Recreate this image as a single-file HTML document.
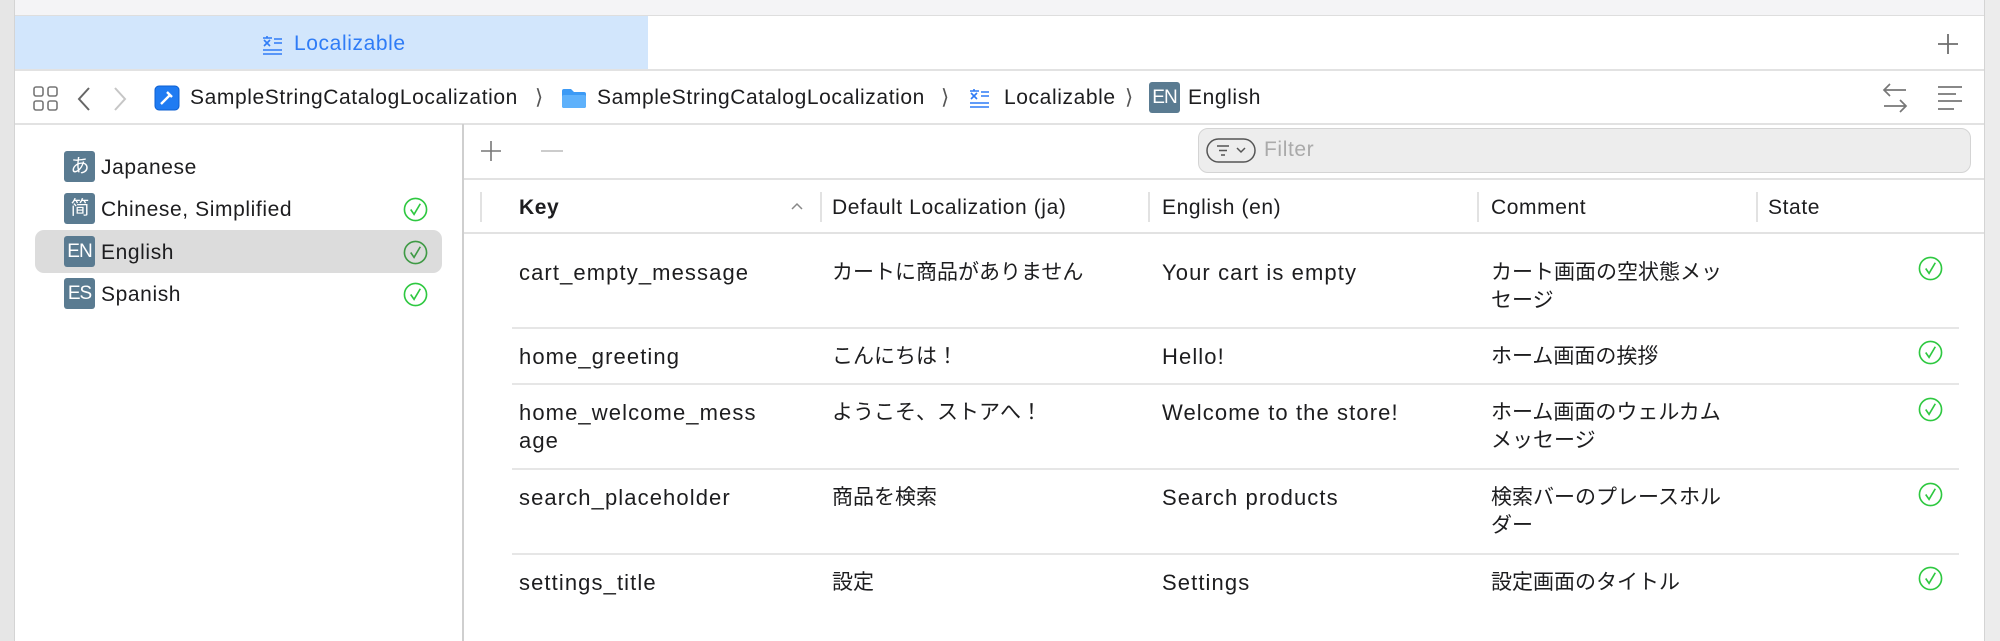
<!DOCTYPE html>
<html><head><meta charset="utf-8">
<style>
*{margin:0;padding:0;box-sizing:border-box}
body{width:2000px;height:641px;overflow:hidden;background:#fff;font-family:"Liberation Sans","Noto Sans CJK JP",sans-serif;color:#1d1d1f;position:relative;font-size:21px;letter-spacing:0.6px}
.a{position:absolute;white-space:nowrap}
.badge{position:absolute;width:31px;height:31px;background:#5a7b91;color:#fff;border-radius:3px;font-size:19px;line-height:31px;text-align:center;letter-spacing:-1px}
.chk{position:absolute;width:25px;height:25px}
.cell{position:absolute;line-height:28px;font-size:22px;letter-spacing:1.1px;white-space:nowrap}
.j{font-size:21px;letter-spacing:0}
.hl{position:absolute;height:2px;background:#e6e6e6;left:512px;width:1447px}
</style></head><body>
<div class="a" style="left:0;top:0;width:15px;height:641px;background:#e6e6e6;border-right:1px solid #d4d4d4"></div>
<div class="a" style="left:1984px;top:0;width:16px;height:641px;background:#ececec;border-left:1px solid #d4d4d4"></div>
<div class="a" style="left:15px;top:0;width:1969px;height:16px;background:#f4f4f6;border-bottom:1px solid #dedede"></div>
<div class="a" style="left:15px;top:16px;width:633px;height:54px;background:#d2e6fc"></div>
<div class="a" style="left:15px;top:69px;width:1969px;height:2px;background:#e2e2e2"></div>
<svg class="a" style="left:262px;top:34px" width="22" height="22" viewBox="0 0 22 22" fill="none" stroke="#2f7cf6" stroke-width="1.6"><path d="M1 4h9M5 2v2M2 6l6 6M8 6l-6 6M12 5h8M12 9h8M1 16h19M1 20h19"/></svg>
<div class="a" style="left:294px;top:32px;font-size:21px;color:#2f7cf6">Localizable</div>
<svg class="a" style="left:1936px;top:32px" width="24" height="24" stroke="#6e6e6e" stroke-width="1.8"><path d="M12 2v20M2 12h20"/></svg>
<div class="a" style="left:15px;top:123px;width:1969px;height:2px;background:#e2e2e2"></div>
<svg class="a" style="left:33px;top:86px" width="25" height="25" fill="none" stroke="#777" stroke-width="1.6"><rect x="1" y="1" width="9" height="9" rx="2"/><rect x="15" y="1" width="9" height="9" rx="2"/><rect x="1" y="15" width="9" height="9" rx="2"/><rect x="15" y="15" width="9" height="9" rx="2"/></svg>
<svg class="a" style="left:76px;top:86px" width="16" height="26" fill="none" stroke="#666" stroke-width="2"><path d="M13 2L3 13l10 11"/></svg>
<svg class="a" style="left:112px;top:86px" width="16" height="26" fill="none" stroke="#c6c6c6" stroke-width="2"><path d="M3 2l10 11L3 24"/></svg>
<svg class="a" style="left:154px;top:85px" width="26" height="26"><rect x="1" y="1" width="24" height="24" rx="4" fill="#1f7bf2" stroke="#0d5fd0"/><path d="M7 19l9-9M13 7l5 5" stroke="#fff" stroke-width="2.4" fill="none"/></svg>
<div class="a" style="left:190px;top:86px">SampleStringCatalogLocalization</div>
<div class="a" style="left:535px;top:85px;color:#555">⟩</div>
<svg class="a" style="left:561px;top:87px" width="26" height="22"><path d="M1 4a2 2 0 012-2h7l3 3h10a2 2 0 012 2v12a2 2 0 01-2 2H3a2 2 0 01-2-2z" fill="#3c9af5"/><rect x="1" y="8" width="24" height="13" rx="2" fill="#5eb1fb"/></svg>
<div class="a" style="left:597px;top:86px">SampleStringCatalogLocalization</div>
<div class="a" style="left:941px;top:85px;color:#555">⟩</div>
<svg class="a" style="left:969px;top:87px" width="22" height="22" viewBox="0 0 22 22" fill="none" stroke="#2f7cf6" stroke-width="1.6"><path d="M1 4h9M5 2v2M2 6l6 6M8 6l-6 6M12 5h8M12 9h8M1 16h19M1 20h19"/></svg>
<div class="a" style="left:1004px;top:86px">Localizable</div>
<div class="a" style="left:1125px;top:85px;color:#555">⟩</div>
<div class="badge" style="left:1149px;top:82px">EN</div>
<div class="a" style="left:1188px;top:86px">English</div>
<svg class="a" style="left:1880px;top:82px" width="30" height="32" fill="none" stroke="#777" stroke-width="1.7"><path d="M26 8H4M10 2L4 8l6 6M4 24h22M20 18l6 6-6 6"/></svg>
<svg class="a" style="left:1936px;top:84px" width="28" height="28" stroke="#777" stroke-width="1.7"><path d="M2 3h24M2 10h18M2 17h24M2 25h16"/></svg>
<div class="a" style="left:462px;top:124px;width:2px;height:517px;background:#cfcfcf"></div>
<div class="a" style="left:35px;top:230px;width:407px;height:43px;background:#dcdcdc;border-radius:9px"></div>
<div class="badge" style="left:64px;top:151px">あ</div><div class="a" style="left:101px;top:156px">Japanese</div>
<div class="badge" style="left:64px;top:193px">简</div><div class="a" style="left:101px;top:198px">Chinese, Simplified</div>
<div class="badge" style="left:64px;top:236px">EN</div><div class="a" style="left:101px;top:241px">English</div>
<div class="badge" style="left:64px;top:278px">ES</div><div class="a" style="left:101px;top:283px">Spanish</div>
<svg class="chk" style="left:403px;top:197px" viewBox="0 0 26 26" fill="none" stroke="#2ec840" stroke-width="1.7"><circle cx="13" cy="13" r="11.5"/><path d="M8 13l3.5 5L18 7"/></svg>
<svg class="chk" style="left:403px;top:240px" viewBox="0 0 26 26" fill="none" stroke="#3f9a45" stroke-width="1.7"><circle cx="13" cy="13" r="11.5"/><path d="M8 13l3.5 5L18 7"/></svg>
<svg class="chk" style="left:403px;top:282px" viewBox="0 0 26 26" fill="none" stroke="#2ec840" stroke-width="1.7"><circle cx="13" cy="13" r="11.5"/><path d="M8 13l3.5 5L18 7"/></svg>
<svg class="a" style="left:480px;top:140px" width="22" height="22" stroke="#777" stroke-width="1.6"><path d="M11 1v20M1 11h20"/></svg>
<svg class="a" style="left:540px;top:140px" width="24" height="22" stroke="#bbb" stroke-width="1.6"><path d="M1 11h22"/></svg>
<div class="a" style="left:1198px;top:128px;width:773px;height:45px;background:#ededed;border:1.5px solid #d4d4d4;border-radius:10px"></div>
<svg class="a" style="left:1206px;top:138px" width="52" height="26" fill="none" stroke="#555" stroke-width="1.5"><rect x="1" y="1" width="48" height="23" rx="11.5"/><path d="M11 8h12M13 12.5h8M15 17h4M31 10l4 4 4-4"/></svg>
<div class="a" style="left:1264px;top:138px;color:#aaa">Filter</div>
<div class="a" style="left:464px;top:178px;width:1520px;height:2px;background:#e2e2e2"></div>
<div class="a" style="left:480px;top:192px;width:2px;height:30px;background:#e2e2e2"></div>
<div class="a" style="left:820px;top:192px;width:2px;height:30px;background:#e2e2e2"></div>
<div class="a" style="left:1148px;top:192px;width:2px;height:30px;background:#e2e2e2"></div>
<div class="a" style="left:1477px;top:192px;width:2px;height:30px;background:#e2e2e2"></div>
<div class="a" style="left:1756px;top:192px;width:2px;height:30px;background:#e2e2e2"></div>
<div class="a" style="left:519px;top:196px;font-weight:bold">Key</div>
<svg class="a" style="left:790px;top:201px" width="14" height="10" fill="none" stroke="#888" stroke-width="1.5"><path d="M2 8l5-5 5 5"/></svg>
<div class="a" style="left:832px;top:196px">Default Localization (ja)</div>
<div class="a" style="left:1162px;top:196px">English (en)</div>
<div class="a" style="left:1491px;top:196px">Comment</div>
<div class="a" style="left:1768px;top:196px">State</div>
<div class="a" style="left:464px;top:232px;width:1520px;height:2px;background:#e2e2e2"></div>
<div class="hl" style="top:327px"></div>
<div class="hl" style="top:383px"></div>
<div class="hl" style="top:468px"></div>
<div class="hl" style="top:553px"></div>

<div class="cell" style="left:519px;top:259px">cart_empty_message</div>
<div class="cell j" style="left:832px;top:259px">カートに商品がありません</div>
<div class="cell" style="left:1162px;top:259px">Your cart is empty</div>
<div class="cell j" style="left:1491px;top:259px">カート画面の空状態メッ<br>セージ</div>

<div class="cell" style="left:519px;top:343px">home_greeting</div>
<div class="cell j" style="left:832px;top:343px">こんにちは！</div>
<div class="cell" style="left:1162px;top:343px">Hello!</div>
<div class="cell j" style="left:1491px;top:343px">ホーム画面の挨拶</div>

<div class="cell" style="left:519px;top:399px">home_welcome_mess<br>age</div>
<div class="cell j" style="left:832px;top:399px">ようこそ、ストアへ！</div>
<div class="cell" style="left:1162px;top:399px">Welcome to the store!</div>
<div class="cell j" style="left:1491px;top:399px">ホーム画面のウェルカム<br>メッセージ</div>

<div class="cell" style="left:519px;top:484px">search_placeholder</div>
<div class="cell j" style="left:832px;top:484px">商品を検索</div>
<div class="cell" style="left:1162px;top:484px">Search products</div>
<div class="cell j" style="left:1491px;top:484px">検索バーのプレースホル<br>ダー</div>

<div class="cell" style="left:519px;top:569px">settings_title</div>
<div class="cell j" style="left:832px;top:569px">設定</div>
<div class="cell" style="left:1162px;top:569px">Settings</div>
<div class="cell j" style="left:1491px;top:569px">設定画面のタイトル</div>

<svg class="chk" style="left:1918px;top:256px" viewBox="0 0 26 26" fill="none" stroke="#2ec840" stroke-width="1.7"><circle cx="13" cy="13" r="11.5"/><path d="M8 13l3.5 5L18 7"/></svg>
<svg class="chk" style="left:1918px;top:340px" viewBox="0 0 26 26" fill="none" stroke="#2ec840" stroke-width="1.7"><circle cx="13" cy="13" r="11.5"/><path d="M8 13l3.5 5L18 7"/></svg>
<svg class="chk" style="left:1918px;top:397px" viewBox="0 0 26 26" fill="none" stroke="#2ec840" stroke-width="1.7"><circle cx="13" cy="13" r="11.5"/><path d="M8 13l3.5 5L18 7"/></svg>
<svg class="chk" style="left:1918px;top:482px" viewBox="0 0 26 26" fill="none" stroke="#2ec840" stroke-width="1.7"><circle cx="13" cy="13" r="11.5"/><path d="M8 13l3.5 5L18 7"/></svg>
<svg class="chk" style="left:1918px;top:566px" viewBox="0 0 26 26" fill="none" stroke="#2ec840" stroke-width="1.7"><circle cx="13" cy="13" r="11.5"/><path d="M8 13l3.5 5L18 7"/></svg>
</body></html>
